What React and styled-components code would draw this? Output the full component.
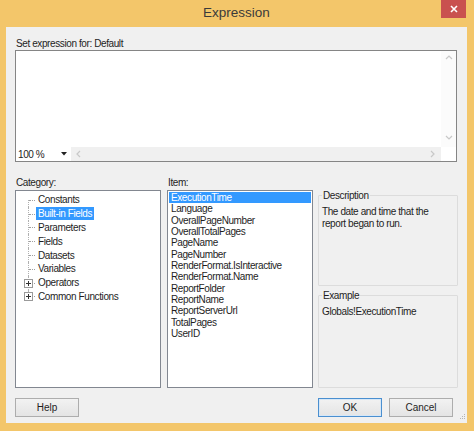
import React from 'react';
import styled, { createGlobalStyle, css } from 'styled-components';

const GlobalStyle = createGlobalStyle`
  html, body {
    margin: 0;
    padding: 0;
    background: #f3c66a;
  }
  body {
    font-family: "Liberation Sans", Arial, sans-serif;
  }
`;

const categories = [
  { name: 'Constants' },
  { name: 'Built-in Fields', selected: true },
  { name: 'Parameters' },
  { name: 'Fields' },
  { name: 'Datasets' },
  { name: 'Variables' },
  { name: 'Operators', expandable: true },
  { name: 'Common Functions', expandable: true },
];

const items = [
  'ExecutionTime',
  'Language',
  'OverallPageNumber',
  'OverallTotalPages',
  'PageName',
  'PageNumber',
  'RenderFormat.IsInteractive',
  'RenderFormat.Name',
  'ReportFolder',
  'ReportName',
  'ReportServerUrl',
  'TotalPages',
  'UserID',
];

const smallText = css`
  font-family: "Liberation Sans", Arial, sans-serif;
  font-size: 10px;
  letter-spacing: -0.4px;
  color: #1e1e1e;
`;

const Window = styled.div`
  width: 474px;
  height: 431px;
  box-sizing: border-box;
  background: #f3c66a;
  display: flex;
  flex-direction: column;
  padding: 0 7px 8px 6px;
  overflow: hidden;
`;

const TitleBar = styled.div`
  height: 27px;
  flex-shrink: 0;
  position: relative;
  display: flex;
  align-items: center;
  justify-content: center;
`;

const Title = styled.span`
  font-family: "Liberation Sans", Arial, sans-serif;
  font-size: 13.5px;
  color: #3a3a3a;
  margin-top: -2px;
`;

const CloseButton = styled.div`
  position: absolute;
  top: 0;
  right: 1px;
  width: 25px;
  height: 18px;
  background: #c9514f;
  display: flex;
  align-items: center;
  justify-content: center;
`;

const Client = styled.div`
  flex: 1;
  background: #f0f0f0;
  display: flex;
  flex-direction: column;
  padding: 11px 10px 0 9px;
  position: relative;
`;

const Label = styled.div`
  ${smallText};
  height: 11px;
  line-height: 11px;
  padding-left: ${p => p.$indent || 1}px;
`;

const Editor = styled.div`
  margin-top: 1px;
  height: 112px;
  box-sizing: border-box;
  border: 1px solid #858585;
  background: #fff;
  display: grid;
  grid-template-columns: 1fr 15px;
  grid-template-rows: 1fr 14px;
`;

const TextArea = styled.div`
  background: #fff;
`;

const VScroll = styled.div`
  background: #fbfbfb;
  display: flex;
  flex-direction: column;
  justify-content: space-between;
  align-items: center;
  padding: 3px 0 5px;
`;

const HBar = styled.div`
  display: flex;
  align-items: stretch;
`;

const ZoomCombo = styled.div`
  ${smallText};
  width: 55px;
  background: #fff;
  display: flex;
  align-items: center;
  justify-content: space-between;
  padding: 0 4px 0 2px;
  box-sizing: border-box;
`;

const HScroll = styled.div`
  flex: 1;
  background: #f0f0f0;
  display: flex;
  align-items: center;
  justify-content: space-between;
  padding: 0 4px;
`;

const Corner = styled.div`
  background: #fff;
`;

const LabelRow = styled.div`
  margin-top: 15px;
  display: grid;
  grid-template-columns: 152px 1fr;
`;

const Panels = styled.div`
  margin-top: 2px;
  height: 198px;
  display: grid;
  grid-template-columns: 146px 146px 139px;
  column-gap: 6px;
  & > :nth-child(3) {
    margin-left: -1px;
  }
`;

const ListBox = styled.div`
  background: #fff;
  border: 1px solid #828790;
  box-sizing: border-box;
  padding: ${p => p.$pad || '1px'};
  overflow: hidden;
`;

const TreeRow = styled.div`
  ${smallText};
  height: 13.8px;
  display: flex;
  align-items: center;
  position: relative;
`;

const Branch = styled.span`
  width: 16px;
  height: 100%;
  flex-shrink: 0;
  position: relative;
  margin-left: 2px;
  &::before {
    content: '';
    position: absolute;
    left: 9px;
    top: ${p => (p.$first ? '50%' : '0')};
    bottom: ${p => (p.$last ? '50%' : '0')};
    border-left: 1px dotted #b0b0b0;
  }
  &::after {
    content: '';
    position: absolute;
    left: 10px;
    right: 0;
    top: 50%;
    border-top: 1px dotted #a0a0a0;
  }
`;

const PlusBox = styled.span`
  position: absolute;
  left: 5px;
  top: 50%;
  margin-top: -4px;
  width: 7px;
  height: 7px;
  border: 1px solid #9a9a9a;
  background: #fff;
  z-index: 1;
  &::before {
    content: '';
    position: absolute;
    left: 1px;
    right: 1px;
    top: 3px;
    height: 1px;
    background: #333;
  }
  &::after {
    content: '';
    position: absolute;
    top: 1px;
    bottom: 1px;
    left: 3px;
    width: 1px;
    background: #333;
  }
`;

const TreeText = styled.span`
  padding: 0 2px;
  height: 13px;
  line-height: 13px;
  margin-left: 1px;
  ${p =>
    p.$selected &&
    css`
      background: #3399ff;
      color: #fff;
    `}
`;

const Item = styled.div`
  ${smallText};
  height: 11.33px;
  line-height: 11.33px;
  padding-left: 2px;
  white-space: nowrap;
  ${p =>
    p.$selected &&
    css`
      background: #3399ff;
      color: #fff;
    `}
`;

const RightCol = styled.div`
  display: flex;
  flex-direction: column;
  gap: 4px;
`;

const Group = styled.fieldset`
  margin: 0;
  border: 1px solid #dcdcdc;
  border-radius: 1px;
  padding: 4px 3px;
  min-width: 0;
  box-sizing: border-box;
  height: ${p => p.$height}px;
  ${smallText};
`;

const Legend = styled.legend`
  ${smallText};
  padding: 0 1px;
  margin-left: 0;
`;

const GroupText = styled.div`
  ${smallText};
  line-height: 12px;
  margin-top: 1px;
`;

const ButtonRow = styled.div`
  margin-top: 10px;
  display: flex;
  align-items: center;
`;

const Button = styled.button`
  ${smallText};
  letter-spacing: 0;
  width: 64px;
  height: 19px;
  padding: 0;
  box-sizing: border-box;
  border: 1px solid ${p => (p.$default ? '#4a8fd0' : '#adadad')};
  background: linear-gradient(#f2f2f2, #e4e4e4);
  margin-left: ${p => p.$gap || 0}px;
  ${p =>
    p.$default &&
    css`
      box-shadow: inset 0 0 0 1px #d6e7f7;
    `}
`;

const Spacer = styled.div`
  flex: 1;
`;

const EndGap = styled.div`
  width: 4px;
`;

const Grip = styled.svg`
  position: absolute;
  right: 1px;
  bottom: 1px;
`;

function Chevron({ dir }) {
  const d = {
    up: 'M1 5 L4 2 L7 5',
    down: 'M1 2 L4 5 L7 2',
    left: 'M5 1 L2 4 L5 7',
    right: 'M2 1 L5 4 L2 7',
  }[dir];
  return (
    <svg width="8" height="8" viewBox="0 0 8 8">
      <path d={d} fill="none" stroke="#c8c8c8" strokeWidth="1.2" />
    </svg>
  );
}

export default function App() {
  return (
    <>
      <GlobalStyle />
      <Window>
        <TitleBar>
          <Title>Expression</Title>
          <CloseButton>
            <svg width="8" height="8" viewBox="0 0 8 8">
              <path d="M1 1 L7 7 M7 1 L1 7" stroke="#fff" strokeWidth="1.6" />
            </svg>
          </CloseButton>
        </TitleBar>
        <Client>
          <Label>Set expression for: Default</Label>
          <Editor>
            <TextArea />
            <VScroll>
              <Chevron dir="up" />
              <Chevron dir="down" />
            </VScroll>
            <HBar>
              <ZoomCombo>
                <span>100 %</span>
                <svg width="6" height="4" viewBox="0 0 6 4">
                  <path d="M0 0 H6 L3 3.5 Z" fill="#222" />
                </svg>
              </ZoomCombo>
              <HScroll>
                <Chevron dir="left" />
                <Chevron dir="right" />
              </HScroll>
            </HBar>
            <Corner />
          </Editor>

          <LabelRow>
            <Label>Category:</Label>
            <Label>Item:</Label>
          </LabelRow>
          <Panels>
            <ListBox $pad="2px 1px">
              {categories.map((c, i) => (
                <TreeRow key={c.name}>
                  <Branch $first={i === 0} $last={i === categories.length - 1}>
                    {c.expandable && <PlusBox />}
                  </Branch>
                  <TreeText $selected={c.selected}>{c.name}</TreeText>
                </TreeRow>
              ))}
            </ListBox>
            <ListBox $pad="1px">
              {items.map((it, i) => (
                <Item key={it} $selected={i === 0}>
                  {it}
                </Item>
              ))}
            </ListBox>
            <RightCol>
              <Group $height={96}>
                <Legend>Description</Legend>
                <GroupText>
                  The date and time that the
                  <br />
                  report began to run.
                </GroupText>
              </Group>
              <Group $height={98}>
                <Legend>Example</Legend>
                <GroupText>Globals!ExecutionTime</GroupText>
              </Group>
            </RightCol>
          </Panels>

          <ButtonRow>
            <Button>Help</Button>
            <Spacer />
            <Button $default>OK</Button>
            <Button $gap={7}>Cancel</Button>
            <EndGap />
          </ButtonRow>
          <Grip width="8" height="8" viewBox="0 0 8 8">
            <g fill="#b4b4b4">
              <rect x="6" y="0" width="1" height="1" />
              <rect x="4" y="2" width="1" height="1" />
              <rect x="6" y="2" width="1" height="1" />
              <rect x="2" y="4" width="1" height="1" />
              <rect x="4" y="4" width="1" height="1" />
              <rect x="6" y="4" width="1" height="1" />
            </g>
          </Grip>
        </Client>
      </Window>
    </>
  );
}
